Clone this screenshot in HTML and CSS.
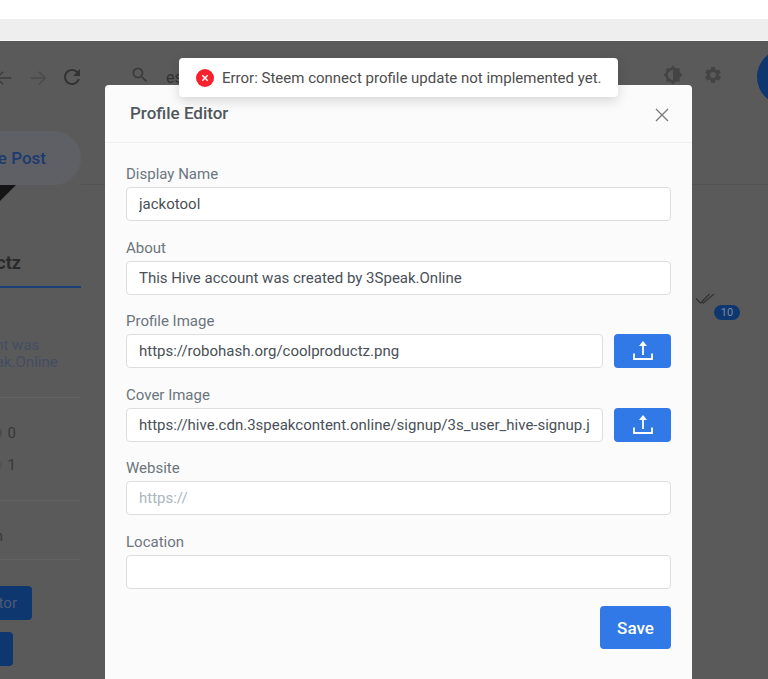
FILE: index.html
```html
<!DOCTYPE html>
<html lang="en">
<head>
    <meta charset="UTF-8">
    <meta name="viewport" content="width=device-width, initial-scale=1.0">
    <title>Profile Editor</title>
    <link rel="stylesheet" href="styles.css">
</head>
<body>
    <div class="top-strip"></div>
    <div class="tab-strip"></div>
    <div class="app">
        <div class="app-header">
            <svg class="nav-icon" viewBox="0 0 20 20"><path d="M18 10H2M9 3l-7 7 7 7"/></svg>
            <svg class="nav-icon forward" viewBox="0 0 20 20"><path d="M2 10h16M11 3l7 7-7 7"/></svg>
            <svg class="reload" viewBox="0 0 24 24"><path d="M17.65 6.35A7.95 7.95 0 0012 4c-4.42 0-7.99 3.58-7.99 8s3.57 8 7.99 8c3.73 0 6.84-2.55 7.73-6h-2.08A5.99 5.99 0 0112 18c-3.31 0-6-2.69-6-6s2.69-6 6-6c1.66 0 3.14.69 4.22 1.78L13 11h7V4l-2.35 2.35z"/></svg>
            <svg class="search-icon" viewBox="0 0 24 24"><path d="M15.5 14h-.79l-.28-.27A6.47 6.47 0 0016 9.5 6.5 6.5 0 109.5 16c1.61 0 3.09-.59 4.23-1.57l.27.28v.79l5 4.99L20.49 19l-4.99-5zm-6 0C7.01 14 5 11.99 5 9.5S7.01 5 9.5 5 14 7.01 14 9.5 11.99 14 9.5 14z"/></svg>
            <span class="search-text">esteem</span>
            <div class="header-right">
                <svg class="tool-icon flip" viewBox="0 0 24 24"><path d="M20 15.31L23.31 12 20 8.69V4h-4.69L12 .69 8.69 4H4v4.69L.69 12 4 15.31V20h4.69L12 23.31 15.31 20H20v-4.69zM12 18V6c3.31 0 6 2.69 6 6s-2.69 6-6 6z"/></svg>
                <svg class="tool-icon" viewBox="0 0 24 24"><path d="M19.14 12.94c.04-.3.06-.61.06-.94s-.02-.64-.07-.94l2.03-1.58a.49.49 0 00.12-.61l-1.92-3.32a.49.49 0 00-.59-.22l-2.39.96c-.5-.38-1.03-.7-1.62-.94l-.36-2.54a.48.48 0 00-.48-.41h-3.84c-.24 0-.43.17-.47.41l-.36 2.54c-.59.24-1.13.57-1.62.94l-2.39-.96a.49.49 0 00-.59.22L2.74 8.87c-.12.21-.08.47.12.61l2.03 1.58c-.05.3-.09.63-.09.94s.02.64.07.94l-2.03 1.58a.49.49 0 00-.12.61l1.92 3.32c.12.22.37.29.59.22l2.39-.96c.5.38 1.03.7 1.62.94l.36 2.54c.05.24.24.41.48.41h3.84c.24 0 .44-.17.47-.41l.36-2.54c.59-.24 1.13-.56 1.62-.94l2.39.96c.22.08.47 0 .59-.22l1.92-3.32c.12-.22.07-.47-.12-.61l-2.01-1.58zM12 15.6A3.6 3.6 0 1112 8.4a3.6 3.6 0 010 7.2z"/></svg>
                <div class="avatar"></div>
            </div>
        </div>

        <div class="app-body">
            <aside class="sidebar">
                <div class="pill">Create Post</div>
                <div class="profile-pic"></div>
                <div class="username">coolproductz</div>
                <p class="bio">This Hive account was<br>created by 3Speak.Online</p>
                <div class="stats">
                    <div class="stat"><span class="stat-icon"></span>0</div>
                    <div class="stat"><span class="stat-icon faint"></span>1</div>
                </div>
                <div class="joined">Joined 2020 on</div>
                <div class="side-btn first">Profile Editor</div>
                <div class="side-btn second">Wallet</div>
            </aside>
            <main class="feed">
                <div class="feed-tabs"></div>
                <div class="feed-meta">
                    <svg class="ticks" viewBox="0 0 22 14"><path d="M1 7l5 5L16 2M8 11l1 1L21 2"/></svg>
                    <span class="count">10</span>
                </div>
            </main>
        </div>

        <div class="modal">
            <div class="modal-header">
                <h2 class="modal-title">Profile Editor</h2>
                <svg class="modal-close" viewBox="0 0 14 14"><path d="M1 1l12 12M13 1L1 13"/></svg>
            </div>
            <form class="modal-body">
                <div class="field">
                    <label class="field-label">Display Name</label>
                    <input class="field-input" type="text" value="jackotool">
                </div>
                <div class="field">
                    <label class="field-label">About</label>
                    <input class="field-input" type="text" value="This Hive account was created by 3Speak.Online">
                </div>
                <div class="field">
                    <label class="field-label">Profile Image</label>
                    <div class="input-row">
                        <input class="field-input" type="text" value="https://robohash.org/coolproductz.png">
                        <button class="upload-btn" type="button">
                            <svg viewBox="0 0 20 20"><path d="M10 14V3M1 12.5V18h18v-5.5"/><path class="arrow-head" d="M10 0l4 5H6z"/></svg>
                        </button>
                    </div>
                </div>
                <div class="field">
                    <label class="field-label">Cover Image</label>
                    <div class="input-row">
                        <input class="field-input" type="text" value="https://hive.cdn.3speakcontent.online/signup/3s_user_hive-signup.jpg">
                        <button class="upload-btn" type="button">
                            <svg viewBox="0 0 20 20"><path d="M10 14V3M1 12.5V18h18v-5.5"/><path class="arrow-head" d="M10 0l4 5H6z"/></svg>
                        </button>
                    </div>
                </div>
                <div class="field">
                    <label class="field-label">Website</label>
                    <input class="field-input" type="text" placeholder="https://">
                </div>
                <div class="field">
                    <label class="field-label">Location</label>
                    <input class="field-input" type="text">
                </div>
                <div class="modal-actions">
                    <button class="save-btn" type="button">Save</button>
                </div>
            </form>
        </div>

        <div class="toast">
            <svg class="toast-icon" viewBox="0 0 18 18"><circle cx="9" cy="9" r="9"/><path d="M6.3 6.3l5.4 5.4M11.700 6.3l-5.400 5.400"/></svg>
            <span>Error: Steem connect profile update not implemented yet.</span>
        </div>
    </div>
</body>
</html>
```

FILE: styles.css
```css
* {
    box-sizing: border-box;
}
body {
    margin: 0;
    height: 100vh;
    overflow: hidden;
    font-family: Roboto, "Liberation Sans", sans-serif;
    background-color: #ffffff;
}
.top-strip {
    height: 19px;
    background: #ffffff;
}
.tab-strip {
    height: 22px;
    background: #eeeeee;
    border-bottom: 1px solid #f7f7f7;
}
.app {
    position: relative;
    height: 638px;
    overflow: hidden;
    background: #5a5a5a;
}
.app-header {
    display: flex;
    align-items: center;
    height: 72px;
    margin-left: -5px;
}
.nav-icon {
    width: 18px;
    height: 18px;
    margin-top: 1px;
    fill: none;
    stroke: #3d3d3d;
    stroke-width: 1.6;
}
.nav-icon.forward {
    margin-left: 16px;
    stroke: #4a4a4a;
}
.reload {
    width: 24px;
    height: 24px;
    margin-left: 13px;
    fill: #333333;
}
.search-icon {
    width: 20px;
    height: 20px;
    margin-left: 46px;
    margin-top: -4px;
    fill: #3a3a3a;
}
.search-text {
    margin-left: 16px;
    font-size: 16px;
    color: #333333;
}
.header-right {
    display: flex;
    align-items: center;
    margin-left: auto;
    margin-right: -45px;
}
.tool-icon {
    width: 20px;
    height: 20px;
    margin-right: 20px;
    margin-top: -4px;
    fill: #444444;
}
.tool-icon.flip {
    transform: scaleX(-1);
    margin-left: 1px;
}
.avatar {
    width: 56px;
    height: 56px;
    margin-left: 14px;
    border-radius: 50%;
    background: #0e3770;
}
.app-body {
    display: flex;
}
.sidebar {
    flex: none;
    width: 200px;
    margin-left: -119px;
    padding-top: 18px;
}
.pill {
    height: 54px;
    border-radius: 27px;
    background: #5f6066;
    color: #1b3a70;
    font-size: 17px;
    font-weight: 500;
    line-height: 54px;
    text-align: right;
    padding-right: 35px;
}
.profile-pic {
    width: 40px;
    height: 20px;
    margin-left: 95px;
    background: #141414;
    clip-path: polygon(0 0, 100% 0, 50% 100%, 30% 100%);
}
.username {
    margin-top: 47px;
    padding-left: 34px;
    padding-bottom: 13px;
    border-bottom: 2px solid #1b3f78;
    font-size: 18px;
    font-weight: 700;
    color: #2a2a2a;
    white-space: nowrap;
}
.bio {
    margin: 49px 0 0;
    padding: 0 0 26px 8px;
    border-bottom: 1px solid #626262;
    font-size: 15px;
    line-height: 17px;
    color: #444d63;
    white-space: nowrap;
}
.stats {
    padding: 26px 0 12px;
    border-bottom: 1px solid #626262;
}
.stat {
    display: flex;
    justify-content: flex-end;
    gap: 6px;
    height: 32px;
    font-size: 15px;
    line-height: 18px;
    color: #383838;
    padding-right: 65px;
}
.stat-icon {
    width: 12px;
    height: 12px;
    margin-top: 3px;
    border-radius: 50%;
    background: #4a4a4a;
}
.stat-icon.faint {
    background: #535353;
}
.joined {
    height: 59px;
    padding-top: 26px;
    padding-right: 78px;
    text-align: right;
    border-bottom: 1px solid #626262;
    font-size: 15px;
    color: #383838;
    white-space: nowrap;
}
.side-btn {
    height: 34px;
    border-radius: 4px;
    background: #0e3770;
    color: #4c5b75;
    font-size: 15px;
    line-height: 34px;
    text-align: right;
    padding-right: 15px;
    white-space: nowrap;
}
.side-btn.first {
    width: 151px;
    margin-top: 26px;
}
.side-btn.second {
    width: 132px;
    margin-top: 12px;
}
.feed {
    flex: 1;
}
.feed-tabs {
    height: 72px;
    border-bottom: 1px solid #525252;
}
.feed-meta {
    display: flex;
    flex-direction: column;
    align-items: flex-start;
    margin-top: 107px;
    padding-left: 614px;
}
.ticks {
    width: 20px;
    height: 13px;
    fill: none;
    stroke: #333333;
    stroke-width: 1.4;
}
.count {
    width: 26px;
    height: 15px;
    margin-left: 19px;
    border-radius: 8px;
    background: #0e3770;
    color: #7d8aa0;
    font-size: 11px;
    line-height: 15px;
    text-align: center;
}
.modal {
    position: absolute;
    left: 105px;
    top: 44px;
    width: 587px;
    height: 700px;
    background: #fbfbfb;
    border-radius: 4px 4px 0 0;
}
.modal-header {
    display: flex;
    align-items: center;
    justify-content: space-between;
    height: 58px;
    padding: 0 23px 0 25px;
    border-bottom: 1px solid #f0f0f0;
}
.modal-title {
    margin: 0 0 2px;
    font-size: 17px;
    font-weight: 500;
    color: #51575d;
}
.modal-close {
    width: 14px;
    height: 14px;
    margin-top: 3px;
    fill: none;
    stroke: #7a7a7a;
    stroke-width: 1.3;
}
.modal-body {
    padding: 22px 21px 0;
}
.field {
    height: 73.5px;
}
.field-label {
    display: block;
    height: 22px;
    padding-top: 1px;
    font-size: 15px;
    font-weight: 400;
    line-height: 17px;
    color: #6c757d;
}
.field-input {
    display: block;
    width: 100%;
    height: 34px;
    padding: 0 12px;
    border: 1px solid #dedede;
    border-radius: 4px;
    background: #ffffff;
    font-family: inherit;
    font-size: 15px;
    color: #495057;
    outline: none;
}
.field-input::placeholder {
    color: #adb5bd;
}
.input-row {
    display: flex;
    gap: 11px;
}
.upload-btn {
    flex: none;
    width: 57px;
    height: 34px;
    padding: 0;
    border: none;
    border-radius: 4px;
    background: #3079e6;
}
.upload-btn svg {
    display: block;
    width: 20px;
    height: 20px;
    margin: 0 auto;
    fill: none;
    stroke: #ffffff;
    stroke-width: 1.8;
}
.upload-btn .arrow-head {
    fill: #ffffff;
    stroke: none;
}
.modal-actions {
    display: flex;
    justify-content: flex-end;
}
.save-btn {
    width: 71px;
    height: 43px;
    border: none;
    border-radius: 4px;
    background: #3079e6;
    color: #ffffff;
    font-family: inherit;
    font-size: 17px;
    font-weight: 500;
}
.toast {
    position: absolute;
    left: 179px;
    top: 17px;
    display: flex;
    align-items: center;
    gap: 8px;
    height: 39px;
    padding: 0 16px 0 17px;
    border-radius: 4px;
    background: #ffffff;
    box-shadow: 0 4px 12px rgba(0, 0, 0, .15);
    color: #4d4d4d;
    font-size: 15px;
    white-space: nowrap;
}
.toast-icon {
    flex: none;
    width: 18px;
    height: 18px;
}
.toast-icon circle {
    fill: #f5222d;
}
.toast-icon path {
    fill: none;
    stroke: #ffffff;
    stroke-width: 1.5;
}
```
